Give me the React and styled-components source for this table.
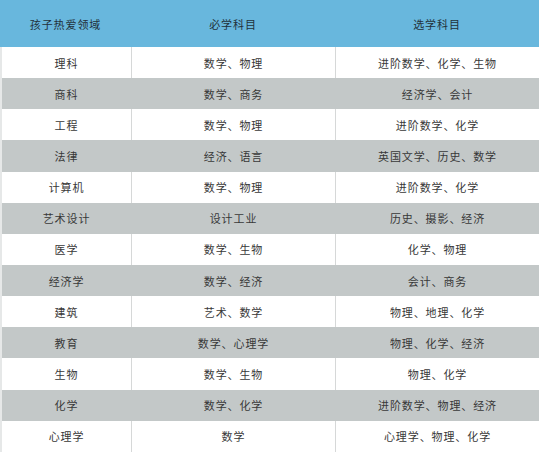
import React from "react";
import styled, { createGlobalStyle } from "styled-components";

const Global = createGlobalStyle`
  html, body { margin: 0; padding: 0; background: #ffffff; }
  body { font-family: "Noto Sans CJK SC", "Noto Sans", sans-serif; }
`;

const Table = styled.div`
  width: 539px;
  display: flex;
  flex-direction: column;
  border-bottom: 1px solid #c9cccc;
`;

const Row = styled.div`
  display: grid;
  grid-template-columns: ${(p) => (p.$header ? "131px 204px 1fr" : "129px 204px 1fr")};
  height: ${(p) => (p.$header ? "47px" : "31.15px")};
  background: ${(p) => (p.$header ? "#68b7dd" : p.$shade ? "#c3c8c8" : "#ffffff")};
  border-left: ${(p) => (p.$header ? "none" : "2px solid #e6e8e8")};
  box-sizing: border-box;
`;

const Cell = styled.div`
  display: flex;
  align-items: center;
  justify-content: center;
  font-size: 11px;
  letter-spacing: 0.9px;
  color: ${(p) => (p.$header ? "#23313a" : "#383838")};
  border-left: ${(p) => (p.$first || p.$header ? "none" : `1px solid ${p.$shade ? "#c3c8c8" : "#d6d8d8"}`)};
  white-space: nowrap;
`;

const data = [
  ["理科", "数学、物理", "进阶数学、化学、生物"],
  ["商科", "数学、商务", "经济学、会计"],
  ["工程", "数学、物理", "进阶数学、化学"],
  ["法律", "经济、语言", "英国文学、历史、数学"],
  ["计算机", "数学、物理", "进阶数学、化学"],
  ["艺术设计", "设计工业", "历史、摄影、经济"],
  ["医学", "数学、生物", "化学、物理"],
  ["经济学", "数学、经济", "会计、商务"],
  ["建筑", "艺术、数学", "物理、地理、化学"],
  ["教育", "数学、心理学", "物理、化学、经济"],
  ["生物", "数学、生物", "物理、化学"],
  ["化学", "数学、化学", "进阶数学、物理、经济"],
  ["心理学", "数学", "心理学、物理、化学"],
];

export default function App() {
  return (
    <>
      <Global />
      <Table>
        <Row $header>
          <Cell $header $first>孩子热爱领域</Cell>
          <Cell $header>必学科目</Cell>
          <Cell $header>选学科目</Cell>
        </Row>
        {data.map((r, i) => {
          const shade = i % 2 === 1;
          return (
            <Row key={i} $shade={shade}>
              <Cell $first $shade={shade}>{r[0]}</Cell>
              <Cell $shade={shade}>{r[1]}</Cell>
              <Cell $shade={shade}>{r[2]}</Cell>
            </Row>
          );
        })}
      </Table>
    </>
  );
}
